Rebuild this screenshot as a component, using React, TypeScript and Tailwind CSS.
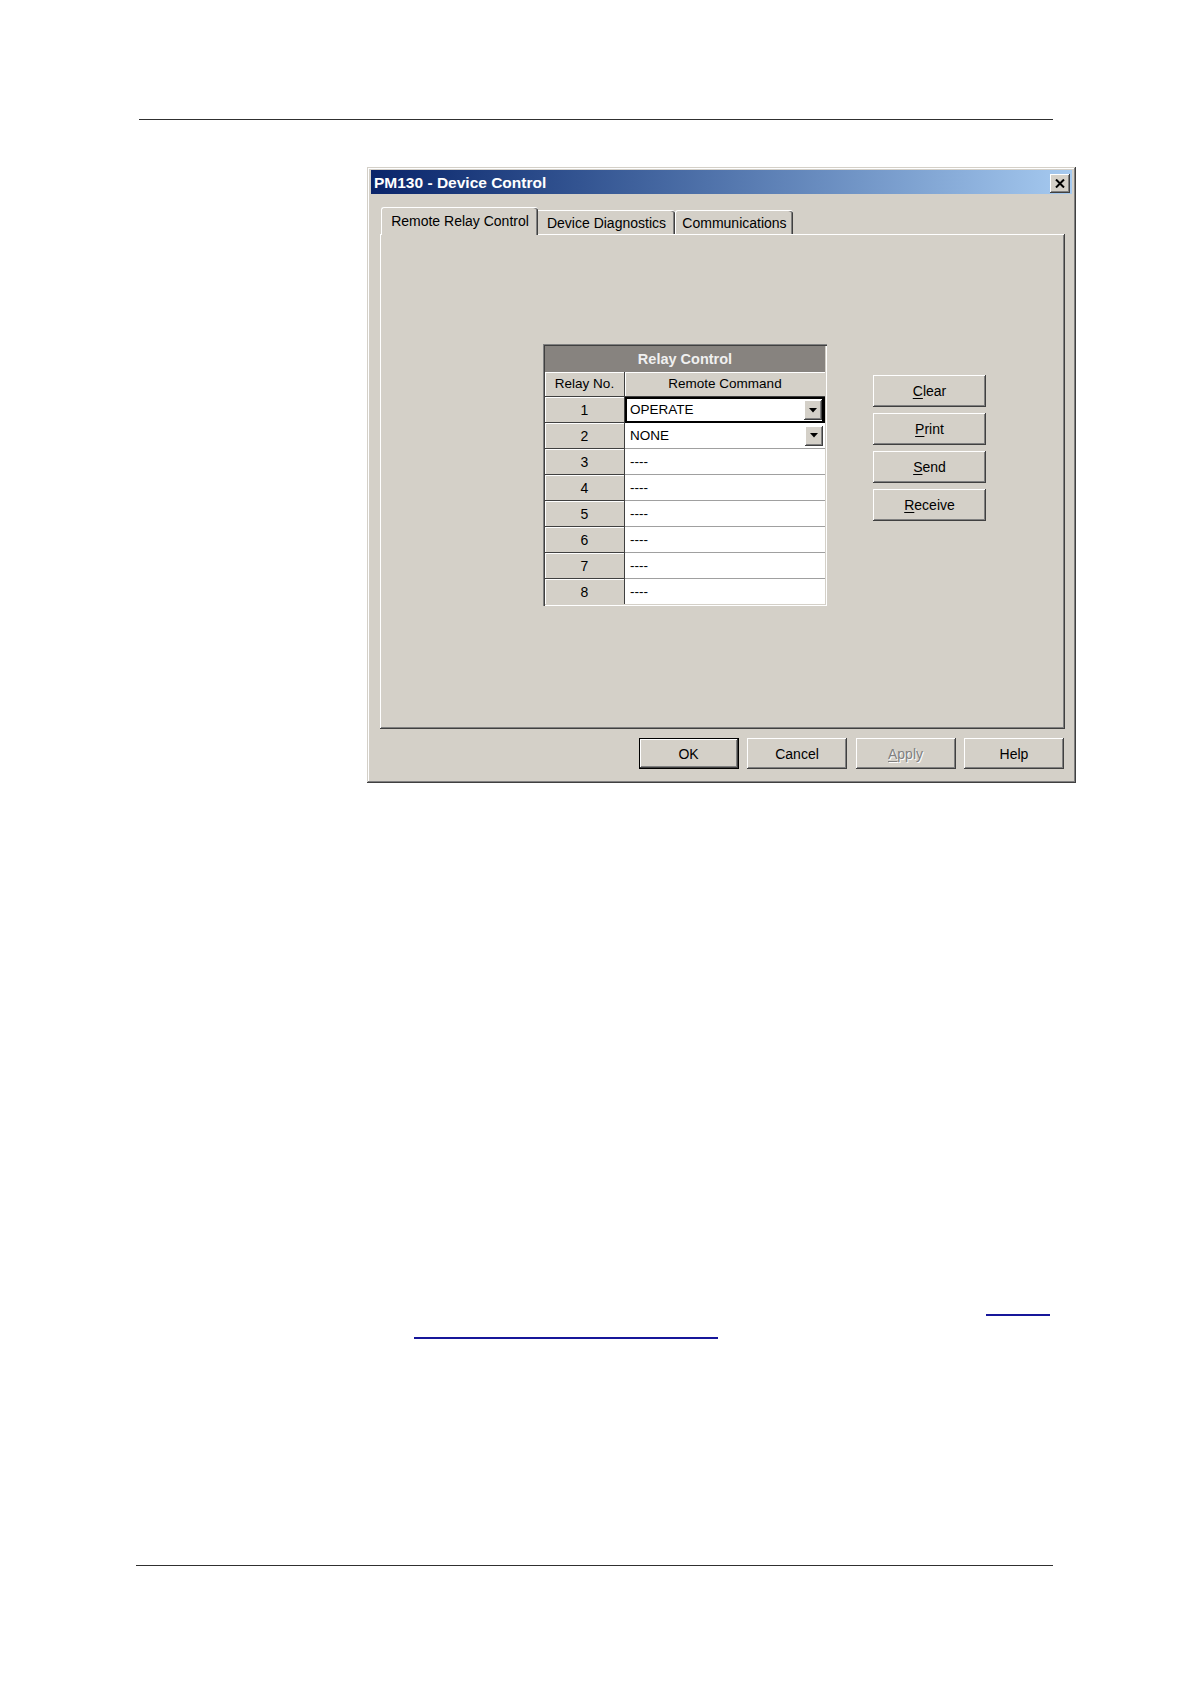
import React from "react";

const RAISED =
  "shadow-[inset_-1px_-1px_0_#404040,inset_1px_1px_0_#ffffff,inset_-2px_-2px_0_#808080,inset_2px_2px_0_#d4d0c8]";

function WinButton({
  children,
  w,
  h,
  def,
  disabled,
}: {
  children: React.ReactNode;
  w: string;
  h: string;
  def?: boolean;
  disabled?: boolean;
}) {
  const size = `${w} ${h}`;
  if (def) {
    return (
      <div className={`${size} border border-black bg-[#d4d0c8] flex`}>
        <div
          className={`flex-1 flex items-center justify-center ${RAISED} text-[14px] leading-none`}
        >
          {children}
        </div>
      </div>
    );
  }
  return (
    <div
      className={`${size} bg-[#d4d0c8] ${RAISED} flex items-center justify-center text-[14px] leading-none ${
        disabled ? "text-[#808080] [text-shadow:1px_1px_0_#ffffff]" : "text-black"
      }`}
    >
      {children}
    </div>
  );
}

function Mn({ c, rest }: { c: string; rest: string }) {
  return (
    <span>
      <span className="underline underline-offset-[2px]">{c}</span>
      {rest}
    </span>
  );
}

function DropBtn() {
  return (
    <div className={`w-[18px] h-[20px] bg-[#d4d0c8] ${RAISED} flex items-center justify-center`}>
      <svg width="8" height="5" viewBox="0 0 8 5">
        <path d="M0 0 H8 L4 4.5 Z" fill="#000" />
      </svg>
    </div>
  );
}

const rows: { n: string; v: string; drop?: boolean; focus?: boolean; h: string }[] = [
  { n: "1", v: "OPERATE", drop: true, focus: true, h: "h-[26px]" },
  { n: "2", v: "NONE", drop: true, h: "h-[26px]" },
  { n: "3", v: "----", h: "h-[26px]" },
  { n: "4", v: "----", h: "h-[26px]" },
  { n: "5", v: "----", h: "h-[26px]" },
  { n: "6", v: "----", h: "h-[26px]" },
  { n: "7", v: "----", h: "h-[26px]" },
  { n: "8", v: "----", h: "h-[25px]" },
];

export default function App() {
  return (
    <div className="w-[1191px] h-[1683px] bg-white overflow-hidden font-['Liberation_Sans',Arial,sans-serif] text-black">
      <div className="h-[119px]" />
      <div className="ml-[139px] w-[914px] h-px bg-[#303030]" />

      {/* Dialog */}
      <div className="ml-[367px] mt-[47px] w-[709px] h-[616px] bg-[#d4d0c8] shadow-[inset_-1px_-1px_0_#404040,inset_1px_1px_0_#d4d0c8,inset_-2px_-2px_0_#808080,inset_2px_2px_0_#ffffff] pt-[3px] px-[4px] flex flex-col">
        {/* Title bar */}
        <div className="h-[24px] bg-gradient-to-r from-[#0a246a] to-[#a6caf0] flex items-center justify-between pl-[3px] pr-[2px]">
          <span className="text-white font-bold text-[15.5px] leading-none mt-[1px]">PM130 - Device Control</span>
          <div className={`w-[20px] h-[19px] mt-[3px] bg-[#d4d0c8] ${RAISED} flex items-center justify-center`}>
            <svg width="10" height="9" viewBox="0 0 10 9">
              <path d="M1 0.5 L9 8.5 M9 0.5 L1 8.5" stroke="#000" strokeWidth="2" />
            </svg>
          </div>
        </div>

        {/* Tabs + panel */}
        <div className="mt-[13px] ml-[9px] w-[685px] flex flex-col">
          <div className="h-[27px] flex items-end pl-[1px]">
            <div className="relative z-10 w-[157px] h-[28px] -mb-[1px] bg-[#d4d0c8] border-l border-t border-white rounded-tl-[3px] rounded-tr-[3px] shadow-[inset_-1px_0_0_#404040,inset_-2px_0_0_#808080] flex items-center justify-center pb-[2px] text-[14px] leading-none">
              Remote Relay Control
            </div>
            <div className="w-[137px] h-[24px] bg-[#d4d0c8] border-t border-white rounded-tr-[3px] shadow-[inset_-1px_0_0_#404040,inset_-2px_0_0_#808080] flex items-center justify-center text-[14px] leading-none">
              Device Diagnostics
            </div>
            <div className="w-[118px] h-[24px] bg-[#d4d0c8] border-l border-t border-white rounded-tl-[3px] rounded-tr-[3px] shadow-[inset_-1px_0_0_#404040,inset_-2px_0_0_#808080] flex items-center justify-center text-[14px] leading-none">
              Communications
            </div>
          </div>
          <div className="h-[495px] bg-[#d4d0c8] shadow-[inset_-1px_-1px_0_#404040,inset_1px_1px_0_#ffffff,inset_-2px_-2px_0_#808080] flex items-start pt-[110px] pl-[163px]">
            {/* Table */}
            <div className="w-[284px] h-[262px] p-[2px] bg-[#d4d0c8] shadow-[inset_1px_1px_0_#808080,inset_2px_2px_0_#404040,inset_-1px_-1px_0_#ffffff,inset_-2px_-2px_0_#d4d0c8] text-[14px] leading-none">
              <div className="h-[26px] bg-[#87837f] flex items-center justify-center text-[#f0f0f0] font-bold text-[14.5px]">
                Relay Control
              </div>
              <div className="h-[25px] flex text-[13.5px]">
                <div className="w-[80px] border-r border-b border-[#404040] shadow-[inset_1px_1px_0_#ffffff] flex items-center justify-center">
                  Relay No.
                </div>
                <div className="flex-1 border-b border-[#404040] shadow-[inset_1px_1px_0_#ffffff] flex items-center justify-center">
                  Remote Command
                </div>
              </div>
              {rows.map((r, i) => (
                <div key={r.n} className={`${r.h} flex`}>
                  <div
                    className={`w-[80px] border-r border-[#404040] ${
                      i < rows.length - 1 ? "border-b" : ""
                    } shadow-[inset_1px_1px_0_#ffffff] flex items-center justify-center`}
                  >
                    {r.n}
                  </div>
                  <div
                    className={`flex-1 bg-white flex items-center justify-between text-[13.5px] ${
                      r.focus
                        ? "border-2 border-r-[3px] border-black pl-[3px] pr-0"
                        : `pl-[5px] pr-[2px] ${i < rows.length - 1 ? "border-b border-[#a0a0a0]" : ""}`
                    }`}
                  >
                    <span>{r.v}</span>
                    {r.drop ? <DropBtn /> : null}
                  </div>
                </div>
              ))}
            </div>

            {/* Side buttons */}
            <div className="ml-[46px] mt-[31px] flex flex-col gap-[6px]">
              <WinButton w="w-[113px]" h="h-[32px]">
                <Mn c="C" rest="lear" />
              </WinButton>
              <WinButton w="w-[113px]" h="h-[32px]">
                <Mn c="P" rest="rint" />
              </WinButton>
              <WinButton w="w-[113px]" h="h-[32px]">
                <Mn c="S" rest="end" />
              </WinButton>
              <WinButton w="w-[113px]" h="h-[32px]">
                <Mn c="R" rest="eceive" />
              </WinButton>
            </div>
          </div>
        </div>

        {/* Bottom buttons */}
        <div className="mt-[9px] ml-[9px] w-[685px] flex justify-end gap-[8.5px] pr-[1px]">
          <WinButton w="w-[100px]" h="h-[31px]" def>
            OK
          </WinButton>
          <WinButton w="w-[100px]" h="h-[31px]">
            Cancel
          </WinButton>
          <WinButton w="w-[100px]" h="h-[31px]" disabled>
            <Mn c="A" rest="pply" />
          </WinButton>
          <WinButton w="w-[100px]" h="h-[31px]">
            Help
          </WinButton>
        </div>
      </div>

      {/* Link underlines */}
      <div className="mt-[531px] ml-[986px] w-[64px] h-[2px] bg-[#16169a]" />
      <div className="mt-[21px] ml-[414px] w-[304px] h-[2px] bg-[#16169a]" />

      {/* Bottom rule */}
      <div className="mt-[226px] ml-[136px] w-[917px] h-px bg-[#303030]" />
    </div>
  );
}
